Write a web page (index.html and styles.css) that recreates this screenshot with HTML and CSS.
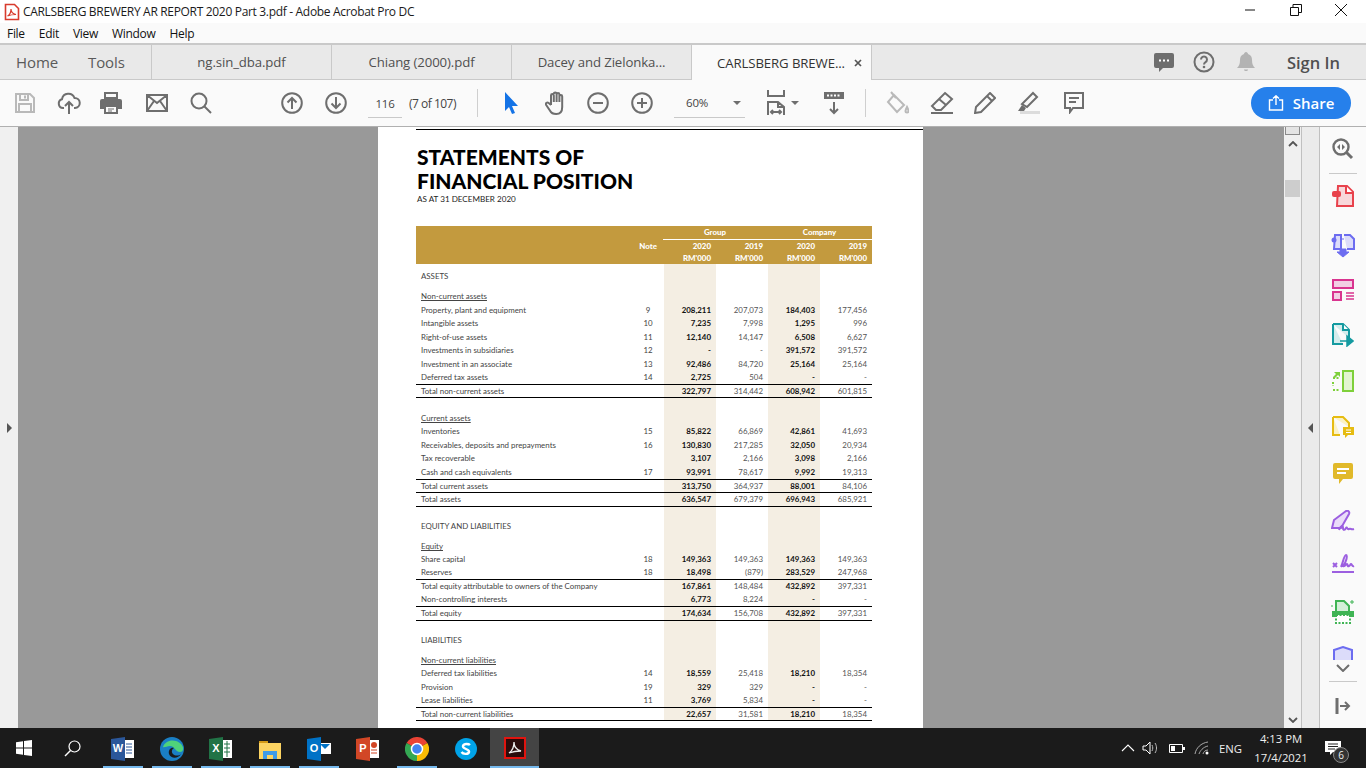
FILE: index.html
```html
<!DOCTYPE html>
<html lang="en">
<head>
<meta charset="utf-8">
<title>CARLSBERG BREWERY AR REPORT 2020 Part 3.pdf - Adobe Acrobat Pro DC</title>
<link rel="stylesheet" href="styles.css">
</head>
<body>
<div class="app">
  <header class="titlebar">
    <svg class="title-icon" width="16" height="18" viewBox="0 0 16 18"><path d="M1.500 1.500h9l4 4v11h-13z" fill="#fff" stroke="#d83b2d" stroke-width="1.600"/><path d="M3.500 13c2-1 3.500-4 3.500-7 0 3 2 5 5 5.500-3 0-6 .5-8.500 1.500z" fill="none" stroke="#d83b2d" stroke-width="1.200"/></svg>
    <span class="title-text">CARLSBERG BREWERY AR REPORT 2020 Part 3.pdf - Adobe Acrobat Pro DC</span>
    <div class="win-btns">
      <svg class="win-btn" width="12" height="12" viewBox="0 0 12 12"><path d="M1 6h10" stroke="#111" fill="none"/></svg>
      <svg class="win-btn" width="12" height="12" viewBox="0 0 12 12"><path d="M.5 3.500h8v8h-8zM3 3.500V.5h8.500v8H8.500" stroke="#111" fill="none"/></svg>
      <svg class="win-btn" width="14" height="14" viewBox="0 0 14 14"><path d="M1 1l12 12M13 1L1 13" stroke="#111" fill="none"/></svg>
    </div>
  </header>
  <nav class="menubar"><span>File</span><span>Edit</span><span>View</span><span>Window</span><span>Help</span></nav>
  <div class="tabbar">
    <div class="tab-home"><span>Home</span><span>Tools</span></div>
    <div class="tab">ng.sin_dba.pdf</div>
    <div class="tab">Chiang (2000).pdf</div>
    <div class="tab">Dacey and Zielonka...</div>
    <div class="tab active"><span>CARLSBERG BREWE...</span><svg class="tab-x" width="8" height="8" viewBox="0 0 8 8"><path d="M1 1l6 6M7 1L1 7" stroke="#555" stroke-width="1.700"/></svg></div>
    <div class="tab-right">
      <svg width="22" height="22" viewBox="0 0 22 22"><path d="M3 2h16a2 2 0 0 1 2 2v11a2 2 0 0 1-2 2H10l-4 4v-4H3a2 2 0 0 1-2-2V4a2 2 0 0 1 2-2z" fill="#6e6e6e"/><path d="M6 9.500h2M10 9.500h2M14 9.500h2" stroke="#fff" stroke-width="2"/></svg>
      <svg width="22" height="22" viewBox="0 0 22 22"><circle cx="11" cy="11" r="9.500" fill="none" stroke="#6e6e6e" stroke-width="2"/><path d="M8 8.500a3 3 0 1 1 4.500 2.600c-1 .6-1.500 1-1.500 2.400" fill="none" stroke="#6e6e6e" stroke-width="2"/><circle cx="11" cy="16" r="1.300" fill="#6e6e6e"/></svg>
      <svg width="18" height="22" viewBox="0 0 18 22"><path d="M9 1c1 0 2 1 2 2 3 1 4 3 4 6 0 4 1 6 3 8H0c2-2 3-4 3-8 0-3 1-5 4-6 0-1 1-2 2-2z" fill="#b3b3b3"/><path d="M7 18.500h4c0 2-4 2-4 0z" fill="#b3b3b3"/></svg>
      <span class="signin">Sign In</span>
    </div>
  </div>
  <div class="toolbar">
    <svg class="ic s-save" width="20" height="20" viewBox="0 0 20 20"><path d="M1 1h14l4 4v14H1zM5 1v6h8V1M4 19v-8h12v8M10 2.500v3"/></svg>
    <svg class="ic s-cloud" width="24" height="24" viewBox="0 0 24 24"><path d="M7 17H6a4.500 4.500 0 0 1-1-8.800A6.500 6.500 0 0 1 17.500 7a5 5 0 0 1 .5 10h-1M12 23V11M8 15l4-4 4 4"/></svg>
    <svg class="s-print" width="22" height="22" viewBox="0 0 22 22"><path d="M5 1h12v5H5z" fill="none" stroke="#6e6e6e" stroke-width="2"/><path d="M2 7h18a2 2 0 0 1 2 2v8h-4v-4H4v4H0V9a2 2 0 0 1 2-2z" fill="#6e6e6e"/><path d="M5 14h12v7H5z" fill="none" stroke="#6e6e6e" stroke-width="2"/><path d="M8 17h6M8 19h4" stroke="#6e6e6e"/></svg>
    <svg class="ic s-mail" width="22" height="18" viewBox="0 0 22 18"><path d="M1 1h20v16H1zM1 1l10 8 10-8M1 17l7-10M21 17l-7-10"/></svg>
    <svg class="ic s-search" width="22" height="22" viewBox="0 0 22 22"><circle cx="9" cy="9" r="7.500"/><path d="M14.500 14.500L21 21"/></svg>
    <svg class="ic s-up" width="22" height="22" viewBox="0 0 22 22"><circle cx="11" cy="11" r="9.800"/><path d="M11 17V6M6.500 10.500L11 6l4.500 4.500"/></svg>
    <svg class="ic s-down" width="22" height="22" viewBox="0 0 22 22"><circle cx="11" cy="11" r="9.800"/><path d="M11 5v11M6.500 11.500L11 16l4.500-4.500"/></svg>
    <span class="pg-input">116</span>
    <span class="pg-of">(7 of 107)</span>
    <i class="tb-sep s1"></i>
    <svg class="s-cursor" width="14" height="22" viewBox="0 0 14 22"><path d="M1 0v19l4-4 3 7 3-1-3-7h6z" fill="#1473e6"/></svg>
    <svg class="ic s-hand" width="22" height="24" viewBox="0 0 22 24"><path d="M6 14V4.500a1.400 1.400 0 0 1 2.800 0V11m0-8a1.400 1.400 0 0 1 2.800 0v8m0-7.500a1.400 1.400 0 0 1 2.800 0V11m0-5.500a1.400 1.400 0 0 1 2.800 0V16c0 4-2 7-6 7-3 0-5-1-6-3l-4-6c-1-2 1-3 2.500-2L6 14"/></svg>
    <svg class="ic s-minus" width="22" height="22" viewBox="0 0 22 22"><circle cx="11" cy="11" r="9.800"/><path d="M6 11h10"/></svg>
    <svg class="ic s-plus" width="22" height="22" viewBox="0 0 22 22"><circle cx="11" cy="11" r="9.800"/><path d="M6 11h10M11 6v10"/></svg>
    <div class="zoom-sel"><span>60%</span><i class="caret"></i></div>
    <svg class="ic s-fit" width="18" height="26" viewBox="0 0 18 26"><path d="M1 0v6h16V0M1 25v-13h10l6 5v8M11 12v5h6M4 22h10M6 20l-2 2 2 2M12 20l2 2-2 2"/></svg>
    <i class="caret c2"></i>
    <svg class="s-tool" width="22" height="24" viewBox="0 0 22 24"><path d="M1 1h20v7H1z" fill="#6e6e6e"/><path d="M4 4.500h14" stroke="#fff" stroke-width="2" stroke-dasharray="2 1.500"/><path d="M11 11v11M7 18l4 4 4-4" fill="none" stroke="#6e6e6e" stroke-width="2"/></svg>
    <i class="tb-sep s2"></i>
    <svg class="ic s-fill" width="24" height="24" viewBox="0 0 24 24"><path d="M9 4l10 10-7 7-9-10zM6 1l5 6M22 16c1 2 1.500 3 1.500 4a1.500 1.500 0 0 1-3 0c0-1 .5-2 1.500-4z"/></svg>
    <svg class="ic s-erase" width="24" height="24" viewBox="0 0 24 24"><path d="M15 2l7 6L11 19H6l-4-4zM9 8l7 6M1 22h22"/></svg>
    <svg class="ic s-pencil" width="22" height="22" viewBox="0 0 22 22"><path d="M16 1l5 5L7 20l-6 1 1-6zM13 4l5 5"/></svg>
    <svg class="s-hilite" width="24" height="24" viewBox="0 0 24 24"><path d="M4 23h20v-3H4z" fill="#dcdcdc"/><path d="M17 2l4 4-10 10-5-3z" fill="none" stroke="#6e6e6e" stroke-width="2"/><path d="M6 14l4 3-2 3H2z" fill="#6e6e6e"/></svg>
    <svg class="ic s-comment" width="20" height="22" viewBox="0 0 20 22"><path d="M1 1h18v15H9l-3 4v-4H1zM5 6h10M5 10h7"/></svg>
    <button class="share" type="button"><svg width="16" height="16" viewBox="0 0 16 16"><path d="M5 5H1.500v10h13V5H11M8 10V1M5 3.500L8 .8l3 2.700" fill="none" stroke="#fff" stroke-width="1.400"/></svg><span>Share</span></button>
  </div>
  <main class="viewer">
    <div class="left-strip"><i class="tri-r"></i></div>
    <div class="doc">
      <article class="page">
        <div class="page-rule"></div>
        <h1>STATEMENTS OF<br>FINANCIAL POSITION</h1>
        <p class="asat">AS AT 31 DECEMBER 2020</p>
        <section class="sheet">
          <div class="head">
            <div class="hrow top"><span class="g">Group</span><span class="g">Company</span></div>
            <div class="hrow"><span class="hn">Note</span><span>2020</span><span>2019</span><span>2020</span><span>2019</span></div>
            <div class="hrow"><span class="hn"></span><span>RM'000</span><span>RM'000</span><span>RM'000</span><span>RM'000</span></div>
          </div>
          <div class="tbody">
            <div class="row h13"><span class="l">ASSETS</span></div>
            <div class="row h13 mt7"><span class="l"><u>Non-current assets</u></span></div>
            <div class="row h14"><span class="l">Property, plant and equipment</span><span class="o">9</span><b>208,211</b><span class="n">207,073</span><b>184,403</b><span class="n">177,456</span></div>
            <div class="row h13"><span class="l">Intangible assets</span><span class="o">10</span><b>7,235</b><span class="n">7,998</span><b>1,295</b><span class="n">996</span></div>
            <div class="row h14"><span class="l">Right-of-use assets</span><span class="o">11</span><b>12,140</b><span class="n">14,147</span><b>6,508</b><span class="n">6,627</span></div>
            <div class="row h13"><span class="l">Investments in subsidiaries</span><span class="o">12</span><b>-</b><span class="n">-</span><b>391,572</b><span class="n">391,572</span></div>
            <div class="row h14"><span class="l">Investment in an associate</span><span class="o">13</span><b>92,486</b><span class="n">84,720</span><b>25,164</b><span class="n">25,164</span></div>
            <div class="row h13"><span class="l">Deferred tax assets</span><span class="o">14</span><b>2,725</b><span class="n">504</span><b>-</b><span class="n">-</span></div>
            <div class="row h14 bt bb"><span class="l">Total non-current assets</span><span class="o"></span><b>322,797</b><span class="n">314,442</span><b>608,942</b><span class="n">601,815</span></div>
            <div class="row h14 mt13"><span class="l"><u>Current assets</u></span></div>
            <div class="row h13"><span class="l">Inventories</span><span class="o">15</span><b>85,822</b><span class="n">66,869</span><b>42,861</b><span class="n">41,693</span></div>
            <div class="row h14"><span class="l">Receivables, deposits and prepayments</span><span class="o">16</span><b>130,830</b><span class="n">217,285</span><b>32,050</b><span class="n">20,934</span></div>
            <div class="row h13"><span class="l">Tax recoverable</span><span class="o"></span><b>3,107</b><span class="n">2,166</span><b>3,098</b><span class="n">2,166</span></div>
            <div class="row h14"><span class="l">Cash and cash equivalents</span><span class="o">17</span><b>93,991</b><span class="n">78,617</span><b>9,992</b><span class="n">19,313</span></div>
            <div class="row h13 bt"><span class="l">Total current assets</span><span class="o"></span><b>313,750</b><span class="n">364,937</span><b>88,001</b><span class="n">84,106</span></div>
            <div class="row h15 bt bb"><span class="l">Total assets</span><span class="o"></span><b>636,547</b><span class="n">679,379</span><b>696,943</b><span class="n">685,921</span></div>
            <div class="row h14 mt12"><span class="l">EQUITY AND LIABILITIES</span></div>
            <div class="row h13 mt7"><span class="l"><u>Equity</u></span></div>
            <div class="row h13"><span class="l">Share capital</span><span class="o">18</span><b>149,363</b><span class="n">149,363</span><b>149,363</b><span class="n">149,363</span></div>
            <div class="row h13"><span class="l">Reserves</span><span class="o">18</span><b>18,498</b><span class="n">(879)</span><b>283,529</b><span class="n">247,968</span></div>
            <div class="row h14 bt"><span class="l">Total equity attributable to owners of the Company</span><span class="o"></span><b>167,861</b><span class="n">148,484</span><b>432,892</b><span class="n">397,331</span></div>
            <div class="row h13"><span class="l">Non-controlling interests</span><span class="o"></span><b>6,773</b><span class="n">8,224</span><b>-</b><span class="n">-</span></div>
            <div class="row h15 bt bb"><span class="l">Total equity</span><span class="o"></span><b>174,634</b><span class="n">156,708</span><b>432,892</b><span class="n">397,331</span></div>
            <div class="row h14 mt12"><span class="l">LIABILITIES</span></div>
            <div class="row h13 mt7"><span class="l"><u>Non-current liabilities</u></span></div>
            <div class="row h13"><span class="l">Deferred tax liabilities</span><span class="o">14</span><b>18,559</b><span class="n">25,418</span><b>18,210</b><span class="n">18,354</span></div>
            <div class="row h14"><span class="l">Provision</span><span class="o">19</span><b>329</b><span class="n">329</span><b>-</b><span class="n">-</span></div>
            <div class="row h13"><span class="l">Lease liabilities</span><span class="o">11</span><b>3,769</b><span class="n">5,834</span><b>-</b><span class="n">-</span></div>
            <div class="row h14 bt bb"><span class="l">Total non-current liabilities</span><span class="o"></span><b>22,657</b><span class="n">31,581</span><b>18,210</b><span class="n">18,354</span></div>
          </div>
        </section>
      </article>
    </div>
    <div class="vscroll">
      <div class="vs-cap"></div>
      <svg class="vs-up" width="10" height="6" viewBox="0 0 10 6"><path d="M1 5l4-4 4 4" fill="none" stroke="#555" stroke-width="1.800"/></svg>
      <div class="vs-thumb"></div>
      <svg class="vs-down" width="10" height="6" viewBox="0 0 10 6"><path d="M1 1l4 4 4-4" fill="none" stroke="#555" stroke-width="1.800"/></svg>
    </div>
    <div class="handle"><i class="tri-l"></i></div>
    <aside class="tools">
      <svg class="t" width="22" height="22" viewBox="0 0 22 22"><circle cx="9" cy="9" r="7.500" fill="none" stroke="#6e6e6e" stroke-width="2.400"/><path d="M14.500 14.500L20 20" stroke="#6e6e6e" stroke-width="3"/><path d="M8 6v6L5 9zM10 6v6l3-3z" fill="#6e6e6e"/></svg>
      <i class="t-sep"></i>
      <svg class="t a1" width="22" height="22" viewBox="0 0 22 22"><path d="M6 1h9l6 6v14H5z" fill="#f8d7da" stroke="#e8424c" stroke-width="2"/><path d="M14 1v7h7" fill="#fff" stroke="#e8424c" stroke-width="2"/><rect x="0" y="6" width="9" height="6" rx="2" fill="#e8424c"/></svg>
      <svg class="t a2" width="24" height="24" viewBox="0 0 24 24"><path d="M4 1h6v14H3zM13 1h6l4 4v10h-7" fill="#dcdcfa" stroke="#6c6cf0" stroke-width="2"/><circle cx="3" cy="6" r="2.500" fill="#6c6cf0"/><path d="M10 5h3M12 15h3v3h3l-6 5-6-5h3v-3z" fill="#6c6cf0" stroke="#6c6cf0"/></svg>
      <svg class="t a3" width="22" height="22" viewBox="0 0 22 22"><path d="M1 1h20v8H1z" fill="#f2cfe4" stroke="#d9348f" stroke-width="2"/><path d="M1 13h8v8H1z" fill="#f2cfe4" stroke="#d9348f" stroke-width="2"/><path d="M14 14h8M14 17h8M14 20h8" stroke="#d9348f" stroke-width="1.500"/></svg>
      <svg class="t a4" width="22" height="24" viewBox="0 0 22 24"><path d="M1 1h10l6 6v8M11 21H1V1" fill="#d3ecec" stroke="#149aa0" stroke-width="2"/><path d="M11 1v6h6" fill="#fff" stroke="#149aa0" stroke-width="2"/><path d="M8 18h9M15 13l6 5-6 5z" fill="#149aa0" stroke="#149aa0" stroke-width="1.500"/></svg>
      <svg class="t a5" width="22" height="22" viewBox="0 0 22 22"><path d="M11 1h10v20H11z" fill="#e2f5d0" stroke="#7ed03a" stroke-width="2"/><path d="M1 8h6M1 12v4M1 20h7" stroke="#7ed03a" stroke-width="2" stroke-dasharray="2 1.500"/><path d="M2 2h6v5l-2-2-3 3-2-1 3-3z" fill="#7ed03a"/></svg>
      <svg class="t a6" width="22" height="22" viewBox="0 0 22 22"><path d="M1 1h10l6 6v4M8 19H1V1" fill="#fbf2c4" stroke="#e6bc12" stroke-width="2"/><path d="M11 11h11v8h-6l-3 3v-3h-2z" fill="#e6bc12"/><path d="M14 14h5M14 16.500h5" stroke="#fff"/></svg>
      <svg class="t a7" width="20" height="22" viewBox="0 0 20 22"><path d="M2 0h16a2 2 0 0 1 2 2v12a2 2 0 0 1-2 2H10l-4 5v-5H2a2 2 0 0 1-2-2V2a2 2 0 0 1 2-2z" fill="#e1b92a"/><path d="M4 6h12M4 10h9" stroke="#fff" stroke-width="2"/></svg>
      <svg class="t a8" width="24" height="22" viewBox="0 0 24 22"><path d="M15 1c2-1 4 1 3 3L10 18H1l2-8z" fill="#eadcf9" stroke="#9c5fe0" stroke-width="2"/><path d="M8 20c2-5 4-5 4-2s2 2 3 0 1 2 3 1 2 1 5 0" fill="none" stroke="#9c5fe0" stroke-width="2"/></svg>
      <svg class="t a9" width="24" height="22" viewBox="0 0 24 22"><path d="M2 10l4 4M6 10l-4 4" stroke="#9c5fe0" stroke-width="2"/><path d="M10 14c2-4 3-12 5-12s0 8-3 11c2 1 3-2 4-2s0 3 2 2 1-2 2-2 1 3 3 2" fill="none" stroke="#9c5fe0" stroke-width="2"/><path d="M1 19h22" stroke="#9c5fe0" stroke-width="2"/></svg>
      <svg class="t a10" width="24" height="24" viewBox="0 0 24 24"><path d="M5 1h8l5 5v6H5z" fill="#d3efd8" stroke="#3fb454" stroke-width="2"/><path d="M1 11h22v6H1z" fill="#3fb454"/><path d="M5 15h14v8H5z" fill="#fff" stroke="#3fb454" stroke-width="2" stroke-dasharray="2 1.500"/><path d="M19 2h4M21 0v4M0 6h2" stroke="#3fb454"/></svg>
      <div class="clip"><svg width="20" height="14" viewBox="0 0 20 14"><path d="M1 14V4l9-3 9 3v10" fill="#dcdcfa" stroke="#6c6cf0" stroke-width="2"/></svg></div>
      <svg class="t a11" width="14" height="8" viewBox="0 0 14 8"><path d="M1 1l6 6 6-6" fill="none" stroke="#6e6e6e" stroke-width="2"/></svg>
      <i class="t-sep b"></i>
      <svg class="t a12" width="16" height="18" viewBox="0 0 16 18"><path d="M2 1v16" stroke="#6e6e6e" stroke-width="3"/><path d="M5 9h9M10 5l4 4-4 4" fill="none" stroke="#6e6e6e" stroke-width="2"/></svg>
    </aside>
  </main>
  <footer class="taskbar">
    <div class="start"><svg width="16" height="16" viewBox="0 0 16 16"><path d="M0 2.300l7-1v6.300H0zM8 1.100L16 0v7.600H8zM0 8.400h7v6.300l-7-1zM8 8.400h8V16l-8-1.100z" fill="#fff"/></svg></div>
    <div class="start"><svg width="17" height="17" viewBox="0 0 17 17"><circle cx="10.500" cy="6.500" r="5.500" fill="none" stroke="#fff" stroke-width="1.200"/><path d="M6.500 10.500L1 16" stroke="#fff" stroke-width="1.500"/></svg></div>
    <div class="apps">
      <div class="app-i on"><svg width="24" height="24" viewBox="0 0 24 24"><path d="M13 3h10v18H13z" fill="#fff"/><path d="M15 7h6M15 10h6M15 13h6M15 16h6" stroke="#2b579a"/><path d="M0 2l14-2v24L0 22z" fill="#2b579a"/><text x="7" y="15" class="app-l">W</text></svg></div>
      <div class="app-i on"><svg width="24" height="24" viewBox="0 0 24 24"><circle cx="12" cy="12" r="12" fill="#1a7fc4"/><path d="M3 10c2-7 12-9 18-3 3 3 3 8-1 8-5 0-5-6-10-6-3 0-6 2-7 1z" fill="#4fd27a"/><path d="M9 17c-1-4 2-7 5-6-2 1-3 4-1 6 2 2 6 2 8 0-3 5-10 5-12 0z" fill="#1a1a1a"/></svg></div>
      <div class="app-i on"><svg width="24" height="24" viewBox="0 0 24 24"><path d="M13 3h10v18H13z" fill="#fff"/><path d="M15 7h6M15 11h6M15 15h6M18 4v16" stroke="#217346"/><path d="M0 2l14-2v24L0 22z" fill="#217346"/><text x="7" y="15" class="app-l">X</text></svg></div>
      <div class="app-i on"><svg width="22" height="20" viewBox="0 0 22 20"><path d="M0 2h9v4H0z" fill="#d49a16"/><path d="M0 4h22v16H0z" fill="#fcd462"/><path d="M4 20v-8h14v8h-4v-4H8v4z" fill="#3f9be8"/></svg></div>
      <div class="app-i on"><svg width="24" height="24" viewBox="0 0 24 24"><path d="M12 6h12v11H12z" fill="#fff"/><path d="M13 7l5 5 5-5z" fill="#0072c6"/><path d="M0 2l14-2v24L0 22z" fill="#0072c6"/><text x="7" y="15" class="app-l">O</text></svg></div>
      <div class="app-i"><svg width="24" height="24" viewBox="0 0 24 24"><path d="M13 3h10v18H13z" fill="#fff"/><path d="M15 16h6M15 13h6" stroke="#d24726"/><circle cx="18" cy="8" r="3" fill="#d24726"/><path d="M0 2l14-2v24L0 22z" fill="#d24726"/><text x="7" y="15" class="app-l">P</text></svg></div>
      <div class="app-i on"><svg width="24" height="24" viewBox="0 0 24 24"><path d="M12 12L1.600 6A12 12 0 0 1 22.400 6z" fill="#ea4335"/><path d="M12 12L22.400 6A12 12 0 0 1 12 24z" fill="#fbbc05"/><path d="M12 12V24A12 12 0 0 1 1.600 6z" fill="#34a853"/><circle cx="12" cy="12" r="5.500" fill="#4285f4" stroke="#fff" stroke-width="1.500"/></svg></div>
      <div class="app-i"><svg width="24" height="24" viewBox="0 0 24 24"><path d="M12 1a11 11 0 0 1 11 11c0 6-5 11-11 11C6 23 1 18 1 12 1 6 6 1 12 1z" fill="#00a3e8"/><path d="M16 8c-1-1-6-2-7 1s7 3 6 6-6 2-7.500 0" fill="none" stroke="#fff" stroke-width="2.400"/></svg></div>
      <div class="app-i act"><svg width="22" height="22" viewBox="0 0 22 22"><path d="M1 1h20v20H1z" fill="#2a0c0c" stroke="#e0140f" stroke-width="2"/><path d="M5 16c3-2 5-6 5-11 0 5 3 8 7 9-4 0-8 .5-12 2z" fill="none" stroke="#eee" stroke-width="1.300"/></svg></div>
    </div>
    <div class="tray">
      <svg width="14" height="8" viewBox="0 0 14 8"><path d="M1 7l6-6 6 6" fill="none" stroke="#fff" stroke-width="1.100"/></svg>
      <svg width="17" height="14" viewBox="0 0 17 14"><path d="M1 5h3l4-4v12l-4-4H1z" fill="none" stroke="#fff"/><path d="M10 4c1 2 1 4 0 6M13 2c2 3 2 7 0 10" fill="none" stroke="#bbb"/></svg>
      <svg width="16" height="9" viewBox="0 0 16 9"><path d="M.5.5h13v8H.5z" fill="none" stroke="#fff"/><path d="M2 2h4v5H2z" fill="#fff"/><path d="M14 3h2v3h-2z" fill="#fff"/></svg>
      <svg width="16" height="14" viewBox="0 0 16 14"><path d="M1 13C2 7 7 2 14 1M5 13c1-3 4-7 9-8M9 13c.5-2 2-4 5-4" fill="none" stroke="#aaa"/><circle cx="13" cy="12" r="1.500" fill="#fff"/></svg>
      <span class="eng">ENG</span>
      <div class="clock"><span>4:13 PM</span><span>17/4/2021</span></div>
      <div class="notif"><svg width="16" height="14" viewBox="0 0 16 14"><path d="M0 0h16v11H8l-3 3v-3H0z" fill="#fff"/><path d="M3 3h10M3 5.500h10M3 8h7" stroke="#222"/></svg><span class="badge">6</span></div>
    </div>
  </footer>
</div>
</body>
</html>
```
FILE: styles.css
```css
* { box-sizing: border-box; }
html, body { margin: 0; height: 100%; overflow: hidden; }
body { font-family: "Open Sans", "Liberation Sans", sans-serif; color: #222; }
.app { width: 1366px; height: 768px; display: flex; flex-direction: column; background: #fff; }

.titlebar { height: 23px; display: flex; align-items: center; background: #fff; padding-left: 4px; }
.title-icon { margin-right: 3px; }
.title-text { font-size: 12px; letter-spacing: -0.32px; color: #1b1b1b; white-space: nowrap; }
.win-btns { margin-left: auto; display: flex; align-items: center; height: 100%; }
.win-btn { display: block; margin-bottom: 3px; }
.win-btn:nth-child(1) { margin-right: 34px; }
.win-btn:nth-child(2) { margin-right: 32px; }
.win-btn:nth-child(3) { margin-right: 18px; }

.menubar { height: 20px; display: flex; align-items: center; background: #fafafa; padding-left: 7px; gap: 14px; font-size: 12px; letter-spacing: -0.3px; color: #111; }

.tabbar { height: 37px; display: flex; background: #e9e9e9; border-top: 2px solid #c9c9c9; border-bottom: 1px solid #c9c9c9; }
.tab-home { width: 152px; display: flex; align-items: center; gap: 30px; padding-left: 16px; font-size: 15px; letter-spacing: -0.1px; color: #5a5a5a; border-right: 1px solid #c9c9c9; }
.tab { width: 180px; display: flex; align-items: center; justify-content: center; font-size: 13.200px; letter-spacing: -0.1px; color: #505050; border-right: 1px solid #c9c9c9; white-space: nowrap; }
.tab.active { background: #fafafa; color: #333; justify-content: flex-start; padding-left: 25px; margin-bottom: -1px; }
.tab-x { margin-left: 9px; }
.tab-right { margin-left: auto; display: flex; align-items: center; }
.tab-right svg:nth-child(1) { margin-right: 18px; }
.tab-right svg:nth-child(2) { margin-right: 22px; }
.signin { margin-left: 32px; margin-right: 26px; font-size: 16.500px; font-weight: 600; color: #505050; }

.toolbar { height: 46px; display: flex; align-items: center; background: #fafafa; }
.ic { display: block; flex: none; }
.ic path, .ic circle { fill: none; stroke: #6e6e6e; stroke-width: 2; }
.toolbar > svg { flex: none; }
.s-save { margin-left: 15px; }
.ic.s-save path { stroke: #b9b9b9; }
.s-cloud { margin-left: 22px; }
.s-print { margin-left: 19px; }
.s-mail { margin-left: 24px; }
.s-search { margin-left: 22px; }
.s-up { margin-left: 69px; }
.s-down { margin-left: 22px; }
.pg-input { width: 34px; margin-left: 21px; height: 29px; line-height: 27px; padding-top: 1px; text-align: center; font-size: 11.500px; letter-spacing: -0.3px; color: #444; border-bottom: 1px solid #c9c9c9; }
.pg-of { margin-left: 7px; width: 50px; font-size: 12px; letter-spacing: -0.5px; color: #444; white-space: nowrap; }
.tb-sep { display: block; width: 1px; height: 28px; background: #cfcfcf; flex: none; }
.tb-sep.s1 { margin-left: 18px; }
.s-cursor { margin-left: 26px; }
.s-hand { margin-left: 27px; }
.s-minus { margin-left: 20px; }
.s-plus { margin-left: 22px; }
.zoom-sel { width: 71px; height: 29px; margin-left: 21px; display: flex; align-items: center; padding-left: 12px; font-size: 11.500px; letter-spacing: -0.2px; color: #444; border-bottom: 1px solid #c9c9c9; }
.zoom-sel span { width: 47px; }
.caret { display: block; width: 0; height: 0; border-left: 4px solid transparent; border-right: 4px solid transparent; border-top: 4px solid #6e6e6e; flex: none; }
.s-fit { margin-left: 22px; }
.c2 { margin-left: 6px; }
.s-tool { margin-left: 24px; }
.tb-sep.s2 { margin-left: 20px; }
.s-fill { margin-left: 19px; }
.ic.s-fill path { stroke: #b9b9b9; }
.s-erase { margin-left: 21px; }
.s-pencil { margin-left: 20px; }
.s-hilite { margin-left: 20px; }
.s-comment { margin-left: 24px; }
.share { margin-left: 167px; width: 100px; height: 32px; border: 0; border-radius: 16px; background: #2680eb; color: #fff; display: flex; align-items: center; justify-content: center; gap: 9px; font: 600 15px "Open Sans", sans-serif; padding: 0; }

.viewer { height: 602px; display: flex; background: #999; border-top: 1px solid #b0b0b0; overflow: hidden; }
.left-strip { width: 18px; background: #f0f0f0; display: flex; align-items: center; justify-content: center; }
.tri-r { display: block; width: 0; height: 0; border-top: 5px solid transparent; border-bottom: 5px solid transparent; border-left: 5px solid #555; }
.tri-l { display: block; width: 0; height: 0; border-top: 5px solid transparent; border-bottom: 5px solid transparent; border-right: 5px solid #555; }
.doc { flex: 1; display: flex; justify-content: center; overflow: hidden; background: #999; padding-right: 1px; }
.vscroll { width: 17px; background: #f0f0f0; display: flex; flex-direction: column; align-items: center; }
.vs-cap { width: 15px; height: 8px; background: #e4e4e4; border: 1px solid #8a8a8a; border-top: 0; }
.vs-up { margin-top: 6px; }
.vs-thumb { width: 15px; height: 17px; margin-top: 33px; background: #cdcdcd; }
.vs-down { margin-top: auto; margin-bottom: 5px; }
.handle { width: 19px; background: #ebebeb; border-left: 1px solid #c0c0c0; border-right: 1px solid #c0c0c0; display: flex; align-items: center; justify-content: center; }
.tools { width: 46px; background: #fafafa; display: flex; flex-direction: column; align-items: center; overflow: hidden; }
.t { display: block; flex: none; }
.tools > .t:first-child { margin-top: 11px; }
.t-sep { display: block; width: 28px; height: 1px; background: #c9c9c9; margin-top: 13px; flex: none; }
.a1 { margin-top: 11px; }
.a2 { margin-top: 27px; }
.a3 { margin-top: 21px; }
.a4 { margin-top: 22px; }
.a5 { margin-top: 23px; }
.a6 { margin-top: 24px; }
.a7 { margin-top: 25px; }
.a8 { margin-top: 25px; }
.a9 { margin-top: 21px; }
.a10 { margin-top: 25px; }
.clip { margin-top: 22px; height: 14px; flex: none; }
.clip svg { display: block; }
.a11 { margin-top: 4px; }
.t-sep.b { margin-top: 9px; }
.a12 { margin-top: 15px; }

.page { width: 545px; height: 601px; flex: none; background: #fff; padding-left: 38px; overflow: hidden; font-family: "Lato", "Liberation Sans", sans-serif; }
.page-rule { height: 1px; margin-top: 2px; background: #000; }
.page h1 { margin: 15px 0 0 1px; font-size: 21px; line-height: 24px; font-weight: 900; color: #000; }
.asat { margin: 1px 0 0 1px; height: 11px; line-height: 11px; font-size: 8.100px; color: #222; }
.sheet { width: 456px; margin-top: 21px; font-size: 7.900px; color: #444; }
.head { height: 38px; background: #c39a3e; color: #fff; font-weight: 900; }
.hrow { display: grid; grid-template-columns: 216px 32px repeat(4, 52px); text-align: right; height: 12px; line-height: 12px; }
.hrow span { padding-right: 5px; }
.hrow .hn { grid-column: 2; padding-right: 7px; }
.hrow.top { height: 14px; line-height: 13px; grid-template-columns: 247px 104px 105px; }
.hrow.top .g { text-align: center; padding: 0; border-bottom: 1px solid #fff; }
.hrow.top .g:first-child { grid-column: 2; }
.tbody { height: 457px; padding-top: 6px;
  background-image: linear-gradient(#f4eee3, #f4eee3), linear-gradient(#f4eee3, #f4eee3);
  background-size: 52px 100%, 52px 100%;
  background-position: 248px 0, 352px 0;
  background-repeat: no-repeat; }
.row { display: grid; grid-template-columns: 216px 32px repeat(4, 52px); text-align: right; white-space: nowrap; }
.row b { color: #111; font-weight: 700; padding-right: 5px; }
.row .n { padding-right: 5px; color: #555; }
.row .l { text-align: left; padding-left: 5px; color: #444; }
.row .o { text-align: center; color: #444; }
.h13 { height: 13px; line-height: 13px; }
.h14 { height: 14px; line-height: 14px; }
.h15 { height: 15px; line-height: 14px; }
.bt { border-top: 1px solid #000; line-height: 13px; }
.bb { border-bottom: 1px solid #000; }
.mt7 { margin-top: 7px; }
.mt12 { margin-top: 12px; }
.mt13 { margin-top: 13px; }

.taskbar { height: 40px; display: flex; align-items: center; background: #1b1b1b; color: #fff; }
.start { width: 48px; height: 40px; display: flex; align-items: center; justify-content: center; flex: none; }
.apps { margin-left: 2px; display: flex; height: 40px; }
.app-i { width: 49px; height: 40px; padding-top: 2px; display: flex; align-items: center; justify-content: center; }
.app-i.on { background: linear-gradient(#76b9ed, #76b9ed) 5px 38px / 40px 2px no-repeat; }
.app-i.act { background: #444; border-bottom: 2px solid #76b9ed; }
.app-l { font: 700 11px "Liberation Sans", sans-serif; fill: #fff; text-anchor: middle; }
.tray { margin-left: auto; display: flex; align-items: center; height: 40px; }
.tray > svg:nth-child(1) { margin-right: 7px; }
.tray > svg:nth-child(2) { margin-right: 10px; }
.tray > svg:nth-child(3) { margin-right: 9px; }
.eng { margin-left: 9px; font-size: 11.300px; color: #eee; width: 20px; white-space: nowrap; }
.clock { width: 84px; display: flex; flex-direction: column; align-items: center; font-size: 11.300px; line-height: 19px; color: #eee; }
.notif { width: 41px; position: relative; margin-left: 2px; }
.notif svg { display: block; }
.badge { position: absolute; left: 8px; top: 6px; width: 16px; height: 16px; border-radius: 50%; background: #333; border: 1px solid #888; font-size: 10px; line-height: 14px; text-align: center; color: #eee; }
```
